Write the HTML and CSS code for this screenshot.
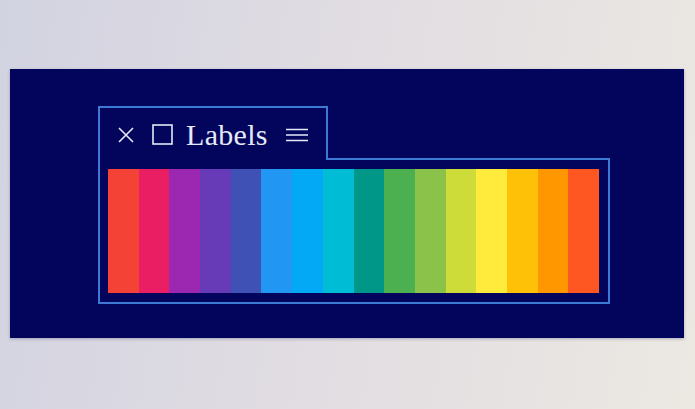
FILE: index.html
```html
<!DOCTYPE html>
<html lang="en">
<head>
    <meta charset="UTF-8">
    <meta name="viewport" content="width=device-width, initial-scale=1.0">
    <title>Labels</title>
    <link rel="stylesheet" href="styles.css">
</head>
<body>
    <div class="panel">
        <div class="widget">
            <div class="tab">
                <svg class="icon-close" width="16" height="16" viewBox="0 0 16 16">
                    <path d="M1 1 L15 15 M15 1 L1 15" stroke="#e4eaf7" stroke-width="1.6" fill="none"/>
                </svg>
                <svg class="icon-box" width="21" height="21" viewBox="0 0 21 21">
                    <rect x="1" y="1" width="19" height="19" stroke="#e4eaf7" stroke-width="1.6" fill="none"/>
                </svg>
                <span class="tab-title">Labels</span>
                <svg class="icon-menu" width="22" height="14" viewBox="0 0 22 14">
                    <path d="M0 1.5 H22 M0 7 H22 M0 12.5 H22" stroke="#e4eaf7" stroke-width="1.5" fill="none"/>
                </svg>
            </div>
            <div class="swatches">
                <div class="swatch" style="background:#f44336"></div>
                <div class="swatch" style="background:#e91e63"></div>
                <div class="swatch" style="background:#9c27b0"></div>
                <div class="swatch" style="background:#673ab7"></div>
                <div class="swatch" style="background:#3f51b5"></div>
                <div class="swatch" style="background:#2196f3"></div>
                <div class="swatch" style="background:#03a9f4"></div>
                <div class="swatch" style="background:#00bcd4"></div>
                <div class="swatch" style="background:#009688"></div>
                <div class="swatch" style="background:#4caf50"></div>
                <div class="swatch" style="background:#8bc34a"></div>
                <div class="swatch" style="background:#cddc39"></div>
                <div class="swatch" style="background:#ffeb3b"></div>
                <div class="swatch" style="background:#ffc107"></div>
                <div class="swatch" style="background:#ff9800"></div>
                <div class="swatch" style="background:#ff5722"></div>
            </div>
        </div>
    </div>
</body>
</html>
```

FILE: styles.css
```css
html, body {
    margin: 0;
    height: 100%;
}
body {
    font-family: "Liberation Serif", serif;
    background: linear-gradient(100deg, #d2d3e1 0%, #e0dce2 45%, #ece8e2 100%);
    padding-top: 69px;
    box-sizing: border-box;
}
.panel {
    margin: 0 11px 0 10px;
    height: 269px;
    background-color: #03045b;
    box-shadow: 0 1px 3px rgba(40, 40, 90, 0.3);
    padding: 37px 0 0 88px;
    box-sizing: border-box;
}
.widget {
    width: 512px;
}
.tab {
    position: relative;
    z-index: 1;
    display: inline-flex;
    align-items: center;
    height: 54px;
    box-sizing: border-box;
    padding: 1px 18px 0 18px;
    margin-bottom: -2px;
    background-color: #03045b;
    border: 2px solid #3d7ad6;
    border-bottom: none;
    color: #e4eaf7;
}
.icon-close {
    margin-right: 18px;
}
.icon-box {
    margin-right: 13px;
    margin-top: -1px;
}
.tab-title {
    font-size: 30px;
    font-weight: 400;
    letter-spacing: 0.3px;
    margin-right: 18px;
    line-height: 1;
}
.swatches {
    display: flex;
    height: 124px;
    padding: 9px 9px 9px 8px;
    border: 2px solid #3d7ad6;
}
.swatch {
    flex: 1;
}
```
